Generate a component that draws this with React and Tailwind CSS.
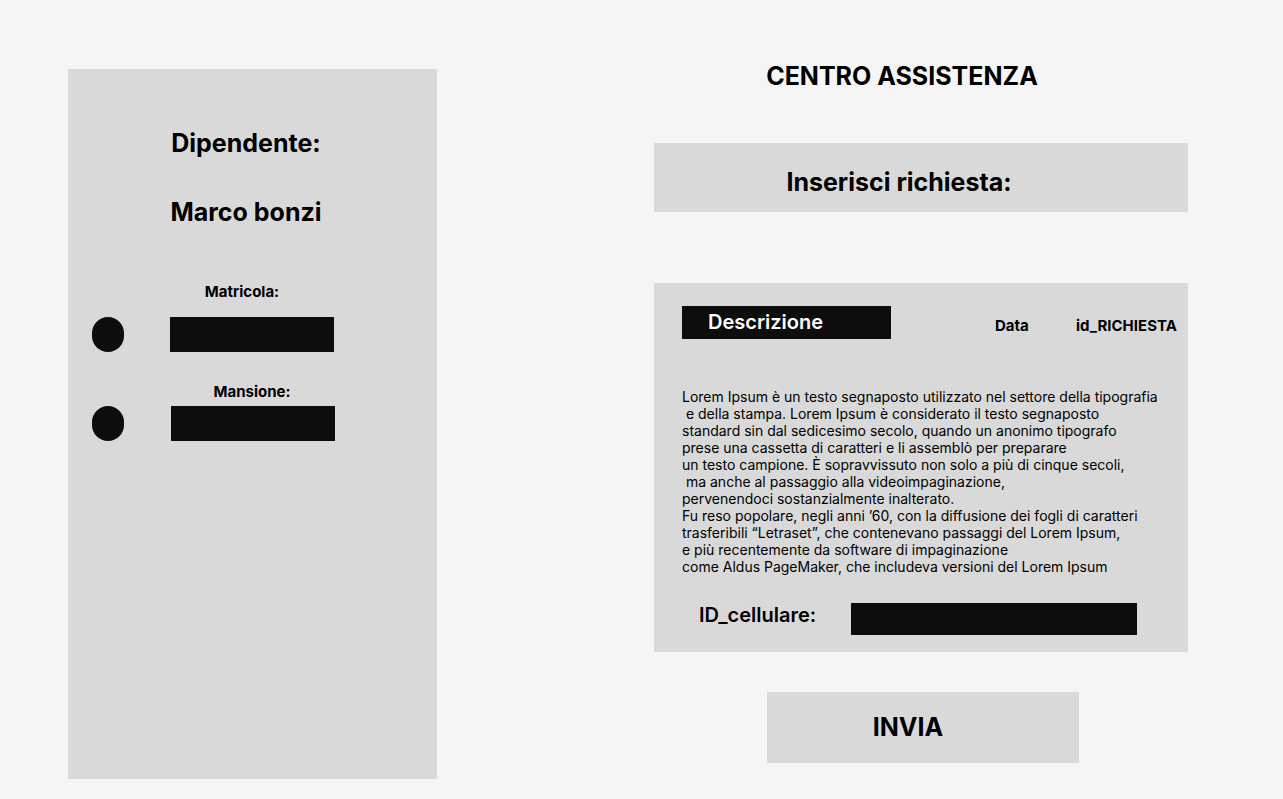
import React from 'react';

function FieldRow({ gap }) {
  return (
    <div className="flex pl-[24px]">
      <div className="w-[32px] h-[35px] rounded-full bg-[#0d0d0d]"></div>
      <div className={`${gap} w-[164px] h-[35px] bg-[#0d0d0d]`}></div>
    </div>
  );
}

export default function App() {
  return (
    <div className="min-h-screen h-[799px] w-full bg-[#f5f5f5] flex items-start text-black font-['Inter',sans-serif]">
      {/* Dipendente panel */}
      <div className="mt-[69px] ml-[68px] w-[369px] h-[710px] bg-[#d9d9d9] flex flex-col">
        <div className="mt-[62px] pr-[13px] text-center text-[25px] leading-none font-bold">Dipendente:</div>
        <div className="mt-[44px] pr-[13px] text-center text-[25px] leading-none font-bold">Marco bonzi</div>
        <div className="mt-[59px] pr-[21px] text-center text-[15px] leading-none font-bold">Matricola:</div>
        <div className="mt-[18px]">
          <FieldRow gap="ml-[46px]" />
        </div>
        <div className="mt-[32px] pr-[1px] text-center text-[15px] leading-none font-bold">Mansione:</div>
        <div className="mt-[7px]">
          <FieldRow gap="ml-[47px]" />
        </div>
      </div>

      {/* Richiesta */}
      <div className="ml-[217px] w-[534px] flex flex-col">
        <h1 className="mt-[64px] pr-[38px] text-center text-[25px] leading-none font-bold">CENTRO ASSISTENZA</h1>

        <div className="mt-[54px] h-[69px] bg-[#d9d9d9] pt-[27px] pr-[44px] text-center text-[25px] leading-none font-bold">
          Inserisci richiesta:
        </div>

        <div className="mt-[71px] h-[369px] bg-[#d9d9d9] flex flex-col">
          <div className="mt-[23px] pl-[28px] flex items-start">
            <div className="w-[209px] h-[33px] bg-[#0d0d0d] pl-[26px] pt-[6px] text-white text-[20px] leading-none font-semibold">
              Descrizione
            </div>
            <div className="ml-[104px] mt-[12px] w-[81px] text-[15px] leading-none font-bold">Data</div>
            <div className="mt-[12px] text-[15px] leading-none font-bold">id_RICHIESTA</div>
          </div>

          <p className="mt-[49px] pl-[28px] text-[14px] leading-[17px] whitespace-pre">
            {`Lorem Ipsum è un testo segnaposto utilizzato nel settore della tipografia
 e della stampa. Lorem Ipsum è considerato il testo segnaposto
standard sin dal sedicesimo secolo, quando un anonimo tipografo
prese una cassetta di caratteri e li assemblò per preparare
un testo campione. È sopravvissuto non solo a più di cinque secoli,
 ma anche al passaggio alla videoimpaginazione,
pervenendoci sostanzialmente inalterato.
Fu reso popolare, negli anni ’60, con la diffusione dei fogli di caratteri
trasferibili “Letraset”, che contenevano passaggi del Lorem Ipsum,
e più recentemente da software di impaginazione
come Aldus PageMaker, che includeva versioni del Lorem Ipsum`}
          </p>

          <div className="mt-[28px] pl-[45px] flex items-start">
            <div className="w-[152px] pt-[2px] text-[20px] leading-none font-semibold">ID_cellulare:</div>
            <div className="w-[286px] h-[32px] bg-[#0d0d0d]"></div>
          </div>
        </div>

        <div className="mt-[40px] ml-[113px] w-[312px] h-[71px] bg-[#d9d9d9] pt-[23px] pr-[30px] text-center text-[25px] leading-none font-bold">
          INVIA
        </div>
      </div>
    </div>
  );
}
